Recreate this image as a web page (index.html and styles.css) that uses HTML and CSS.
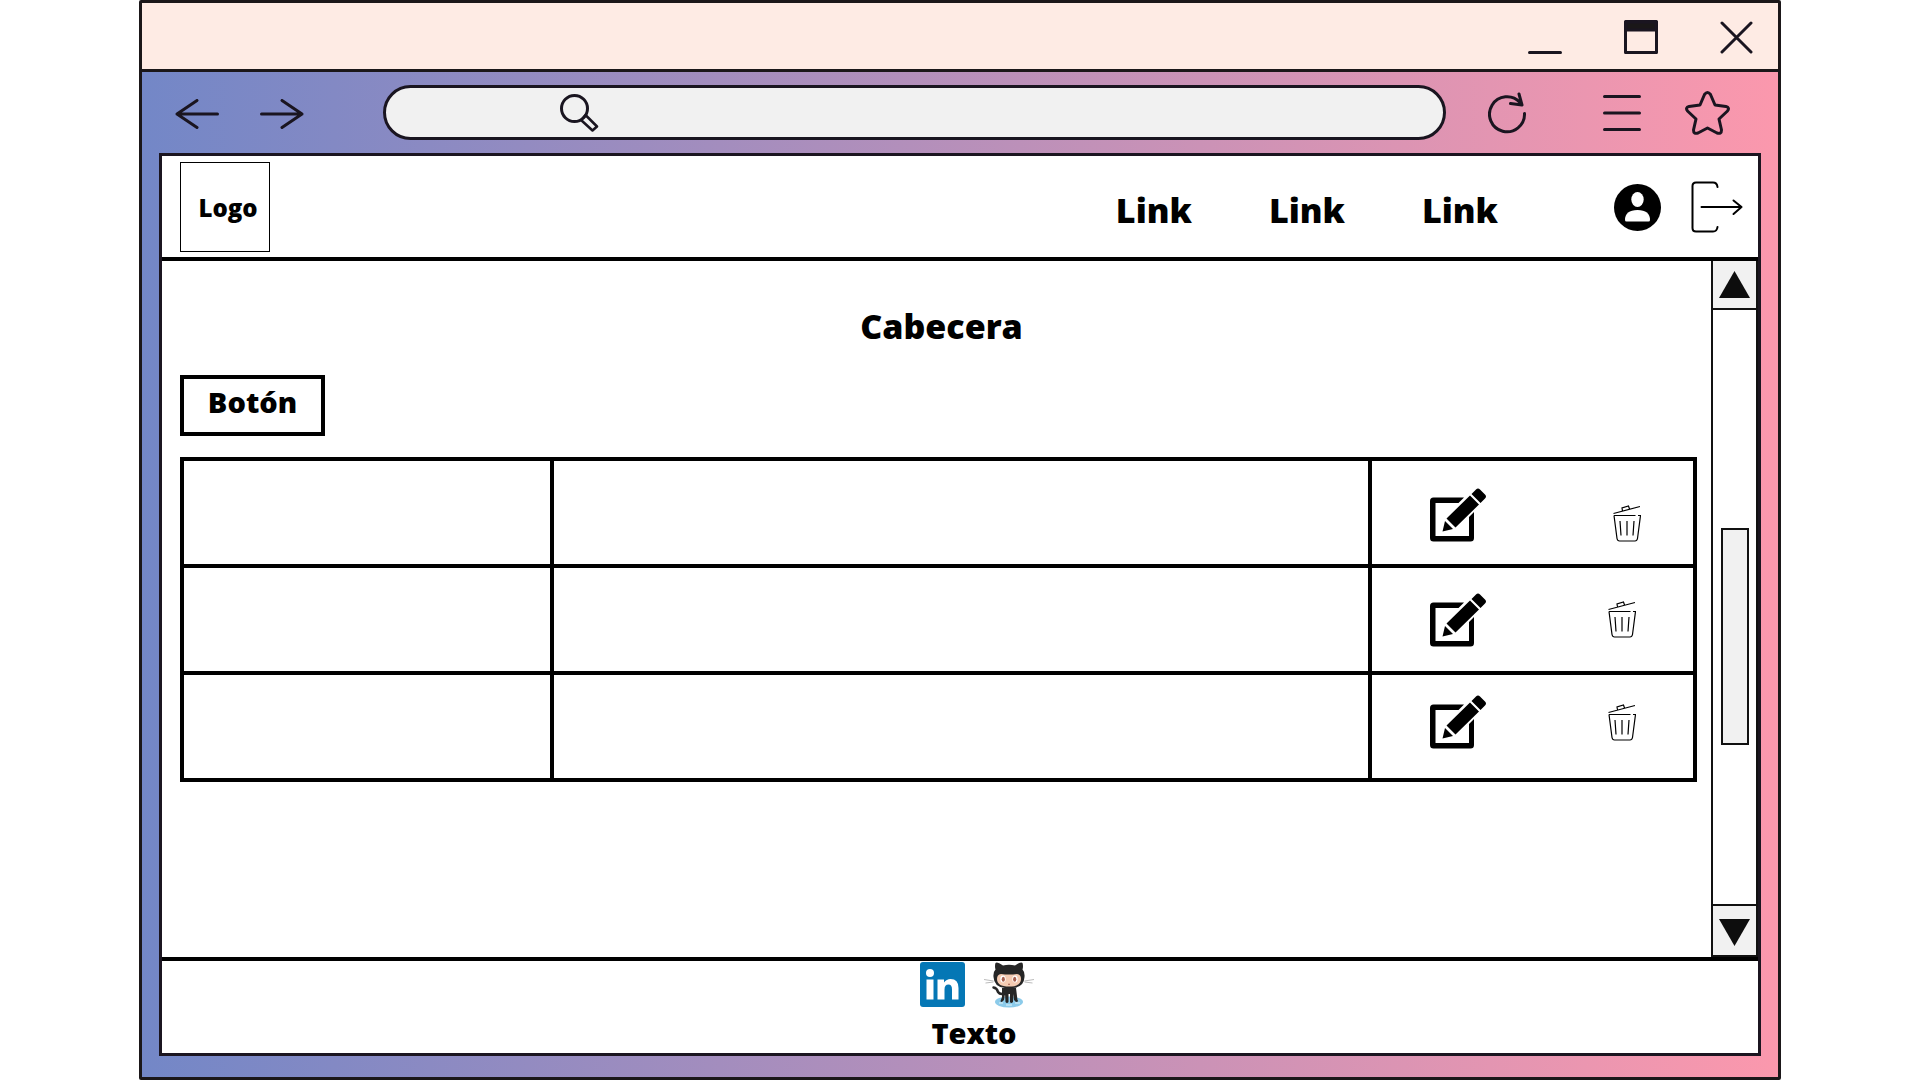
FILE: index.html
```html
<!DOCTYPE html>
<html lang="es">
<head>
<meta charset="utf-8">
<title>Cabecera</title>
<link rel="stylesheet" href="styles.css">
</head>
<body>
<svg class="defs" aria-hidden="true">
  <symbol id="edit" viewBox="0 0 56 54">
    <path d="M34 9.500H3.500A3.500 3.500 0 0 0 0 13V50A3.500 3.500 0 0 0 3.500 53.500H40.500A3.500 3.500 0 0 0 44 50V24L39 29V48H5.500V15H28.500Z"/>
    <path d="M40 7.500 49 16.500 25.500 39.500 16.500 30.500ZM41.500 6 46 1.500Q48 -.5 50 1.500L55 6.500Q57 8.500 55 10.500L50.500 15ZM15 33 23 41 12.500 43.500Z"/>
  </symbol>
  <symbol id="trash" viewBox="0 0 28 37">
    <path d="M.5 8.500 27 1.500M9.500 6 9 3 15.500 1 16.500 4M1 10.500H22.500M25 10.500H27.500L24.500 33.500Q24 36 22 36H6.500Q4.500 36 4 33.500L1 10.500M7 16 8 30.500M14 16V30.500M21 16 20 30.500" fill="none" stroke="#000" stroke-width="1.200"/>
  </symbol>
</svg>
<div class="window">
  <div class="titlebar">
    <button class="icon-btn" aria-label="Minimizar"><svg width="34" height="34" viewBox="0 0 34 34" class="line"><path d="M1.500 32.500H32.500"/></svg></button>
    <button class="icon-btn" aria-label="Maximizar"><svg width="34" height="34" viewBox="0 0 34 34" class="line"><path d="M1.500 1.500H32.500V32.500H1.500Z"/><path d="M2 2H32V10H2Z" fill="#1a1718"/></svg></button>
    <button class="icon-btn" aria-label="Cerrar"><svg width="34" height="34" viewBox="0 0 34 34" class="line"><path d="M2 3 31 32M31 3 2 32"/></svg></button>
  </div>
  <div class="toolbar">
    <div class="history">
      <button class="icon-btn" aria-label="Atrás"><svg width="44" height="30" viewBox="0 0 44 30" class="line"><path d="M42.500 15H2L22 1.500M2 15 22 28.500"/></svg></button>
      <button class="icon-btn" aria-label="Adelante"><svg width="44" height="30" viewBox="0 0 44 30" class="line"><path d="M1.500 15H42L22 1.500M42 15 22 28.500"/></svg></button>
    </div>
    <label class="search">
      <svg width="39" height="38" viewBox="0 0 39 38" class="line"><circle cx="14.500" cy="14.500" r="13" /><path d="M21 26 25.500 21 37 32.500 32.500 36.500Z" stroke-width="2.500"/></svg>
      <input type="text" aria-label="Dirección">
    </label>
    <div class="tools">
      <button class="icon-btn" aria-label="Recargar"><svg width="39" height="42" viewBox="0 0 39 42" class="line"><path d="M36.500 21.500A17.500 17.500 0 1 1 32 10.500M31 2 34 13 22.500 11.500"/></svg></button>
      <button class="icon-btn" aria-label="Menú"><svg width="38" height="38" viewBox="0 0 38 38" class="line"><path d="M1.500 2.500H36.500M1.500 19H36.500M1.500 35.500H36.500"/></svg></button>
      <button class="icon-btn star" aria-label="Favoritos"><svg width="45" height="44" viewBox="0 0 45 44" class="line"><path d="M19.500 3.500Q22.500 -.5 25.500 3.500L30 14 41 15.500Q45 16.500 42.500 20L34 28 36.500 39Q36.500 43.500 32 42L22.500 37 13 42Q8.500 43.500 8.500 39L11 28 2.500 20Q0 16.500 4 15.500L15 14Z"/></svg></button>
    </div>
  </div>
  <div class="page">
    <header class="header">
      <a href="#" class="logo">Logo</a>
      <nav class="nav">
        <a href="#">Link</a>
        <a href="#">Link</a>
        <a href="#">Link</a>
      </nav>
      <div class="account">
        <button class="icon-btn" aria-label="Perfil"><svg width="47" height="47" viewBox="0 0 47 47"><circle cx="23.500" cy="23.500" r="23.500"/><ellipse cx="23.500" cy="15.500" rx="6.200" ry="7.500" fill="#fff"/><path d="M11 36Q11 26 23.500 26T36 36Q36 37.500 34.500 37.500H12.500Q11 37.500 11 36Z" fill="#fff"/></svg></button>
        <button class="icon-btn" aria-label="Salir"><svg width="52" height="52" viewBox="0 0 52 52" class="line logout"><path d="M26.500 6Q26 1.500 22 1.500H5Q1.500 1.500 1.500 5V47Q1.500 50.500 5 50.500H22Q26 50.500 26.500 46M10.500 26H50.500M42.500 19.500 50.500 26 42.500 33"/></svg></button>
      </div>
    </header>
    <div class="body">
      <main class="main">
        <h1>Cabecera</h1>
        <button class="button">Botón</button>
        <table class="table">
          <colgroup><col class="col-name"><col><col class="col-actions"></colgroup>
          <tbody>
            <tr><td></td><td></td><td><div class="actions actions-low">
              <button class="icon-btn" aria-label="Editar"><svg width="56" height="54"><use href="#edit"/></svg></button>
              <button class="icon-btn" aria-label="Borrar"><svg width="28" height="37"><use href="#trash"/></svg></button>
            </div></td></tr>
            <tr><td></td><td></td><td><div class="actions">
              <button class="icon-btn" aria-label="Editar"><svg width="56" height="54"><use href="#edit"/></svg></button>
              <button class="icon-btn" aria-label="Borrar"><svg width="28" height="37"><use href="#trash"/></svg></button>
            </div></td></tr>
            <tr><td></td><td></td><td><div class="actions actions-high">
              <button class="icon-btn" aria-label="Editar"><svg width="56" height="54"><use href="#edit"/></svg></button>
              <button class="icon-btn" aria-label="Borrar"><svg width="28" height="37"><use href="#trash"/></svg></button>
            </div></td></tr>
          </tbody>
        </table>
      </main>
      <div class="scrollbar">
        <button class="scroll-btn up" aria-label="Subir"><svg width="31" height="27" viewBox="0 0 31 27"><path d="M15.500 0 31 27H0Z"/></svg></button>
        <div class="track"><div class="thumb"></div></div>
        <button class="scroll-btn down" aria-label="Bajar"><svg width="31" height="27" viewBox="0 0 31 27"><path d="M15.500 27 31 0H0Z"/></svg></button>
      </div>
    </div>
    <footer class="footer">
      <div class="social">
        <a href="#" aria-label="LinkedIn"><svg width="45" height="45" viewBox="0 0 45 45"><rect width="45" height="45" rx="3" fill="#0577b5"/><g fill="#fff"><circle cx="10" cy="11" r="4"/><rect x="6.500" y="17.500" width="7" height="20"/><path d="M17.500 17.500H24V20.500Q26.500 17 30.500 17 38.500 17 38.500 26V37.500H32V27.500Q32 22.500 28.500 22.500 24.500 22.500 24.500 27.500V37.500H17.500Z"/></g></svg></a>
        <a href="#" aria-label="GitHub"><svg width="52" height="46" viewBox="0 0 52 46">
          <ellipse cx="26" cy="40" rx="14" ry="5.500" fill="#8ccbea"/>
          <path d="M16 41H20M23 43H29M32 41H37" stroke="#c4e6f5" stroke-width="1.500"/>
          <path d="M10.500 25.500Q14 26 15 30 17 33 22 31.500" fill="none" stroke="#262626" stroke-width="2.500" stroke-linecap="round"/>
          <path d="M19 26H33L34.500 38Q36 40 33 40L31 38 30.500 32 30 40Q28 42 27 40V32H25.500V40Q24 42 22.500 40L22 32 21 38Q18 41.500 17.500 39L19 35Z" fill="#262626"/>
          <path d="M12.500 1Q14-.5 20 3.500 26 2 32 3.500 38-.5 39.500 1 40.500 4 39.500 7.500 42 10 41.500 15 41 25 30 26H22Q11 25 10.500 15 10 10 12.500 7.500 11.500 4 12.500 1Z" fill="#262626"/>
          <path d="M18 12Q22 12.500 26 12.500T34 12Q38 12.500 38 17 38 24.500 26 24.500T14 17Q14 12.500 18 12Z" fill="#f4cbb2"/>
          <g fill="#fff"><ellipse cx="20" cy="17" rx="2.700" ry="3.500"/><ellipse cx="32" cy="17" rx="2.700" ry="3.500"/></g>
          <g fill="#a75f4e"><ellipse cx="20.300" cy="17.300" rx="1.600" ry="2.500"/><ellipse cx="31.700" cy="17.300" rx="1.600" ry="2.500"/></g>
          <path d="M25 22Q26 23 27 22" fill="none" stroke="#a75f4e"/>
          <path d="M1 17.500 10.500 19M2.500 21 10.500 20M51 17.500 41.500 19M49.500 21 41.500 20" stroke="#aaa" stroke-width=".8"/>
        </svg></a>
      </div>
      <p>Texto</p>
    </footer>
  </div>
</div>
</body>
</html>
```
FILE: styles.css
```css
* {
  box-sizing: border-box;
}

body {
  margin: 0;
  padding: 0 139px;
  background: #fff;
  color: #000;
  font-family: "Open Sans", sans-serif;
  font-weight: 800;
}

a {
  color: inherit;
  text-decoration: none;
}

svg {
  display: block;
}

.defs {
  position: absolute;
  width: 0;
  height: 0;
}

.line {
  fill: none;
  stroke: #1a1520;
  stroke-width: 3;
  stroke-linecap: round;
  stroke-linejoin: round;
}

.logout {
  stroke: #000;
  stroke-width: 2;
}

.icon-btn {
  padding: 0;
  border: 0;
  background: none;
}

.window {
  display: flex;
  flex-direction: column;
  min-height: 100vh;
  border: 3px solid #1b1719;
  border-radius: 2px;
  background: linear-gradient(90deg, #7387c7, #fb98ad);
}

.titlebar {
  display: flex;
  align-items: center;
  justify-content: flex-end;
  gap: 62px;
  height: 69px;
  padding: 1px 24px 0 0;
  border-bottom: 3px solid #1b1719;
  background: #feebe4;
}

.toolbar {
  display: flex;
  align-items: center;
  height: 81px;
  padding: 0 48px 0 33px;
}

.history {
  display: flex;
  gap: 41px;
  margin-right: 79px;
  padding-top: 2px;
}

.search {
  display: flex;
  flex: 1;
  align-items: center;
  gap: 16px;
  height: 55px;
  padding: 0 28px 0 174px;
  border: 3px solid #1a1520;
  border-radius: 28px;
  background: #f1f1f1;
}

.search input {
  flex: 1;
  min-width: 0;
  border: 0;
  outline: 0;
  background: none;
  font: inherit;
  font-size: 24px;
}

.tools {
  display: flex;
  align-items: center;
  margin-left: 42px;
}

.tools .icon-btn + .icon-btn {
  margin-left: 76px;
}

.tools .icon-btn + .star {
  margin-left: 44px;
}

.page {
  display: flex;
  flex: 1;
  flex-direction: column;
  margin: 0 17px 21px;
  border: 3px solid #1b1520;
  background: #fff;
}

.header {
  display: flex;
  align-items: center;
  height: 105px;
  padding: 1px 15px 0 18px;
  border-bottom: 4px solid #000;
}

.logo {
  display: grid;
  place-items: center;
  width: 90px;
  height: 90px;
  padding-left: 6px;
  border: 1px solid #000;
  font-size: 24px;
}

.nav {
  display: flex;
  gap: 77px;
  margin-left: auto;
  padding-top: 6px;
  font-size: 34px;
}

.account {
  display: flex;
  align-items: center;
  gap: 30px;
  margin-left: 116px;
}

.body {
  display: flex;
  flex: 1;
}

.main {
  flex: 1;
  padding: 41px 14px 0 18px;
}

h1 {
  margin: 0 0 25px;
  padding-left: 6px;
  font-size: 34px;
  font-weight: 800;
  line-height: 48px;
  text-align: center;
}

.button {
  display: block;
  width: 145px;
  height: 61px;
  margin-bottom: 21px;
  padding: 0 0 8px;
  border: 4px solid #000;
  background: #fff;
  color: #000;
  font: inherit;
  font-size: 29px;
  line-height: 40px;
}

.table {
  width: 100%;
  border-collapse: collapse;
  table-layout: fixed;
}

.table td {
  height: 107px;
  padding: 0;
  border: 4px solid #000;
}

.col-name {
  width: 370px;
}

.col-actions {
  width: 325px;
}

.actions {
  display: flex;
  align-items: center;
  gap: 122px;
  padding-left: 58px;
}

.actions-low {
  align-items: flex-end;
  gap: 127px;
  padding-top: 5px;
}

.actions-high {
  padding-bottom: 9px;
}

.scrollbar {
  display: flex;
  flex-direction: column;
  width: 47px;
  border: solid #111;
  border-width: 0 2px 2px;
}

.scroll-btn {
  display: grid;
  place-items: center;
  height: 49px;
  padding: 0;
  border: 0 solid #111;
  background: #f1f1f1;
}

.scroll-btn svg {
  fill: #0d0d0d;
}

.up {
  border-bottom-width: 2px;
}

.down {
  height: 51px;
  padding-top: 4px;
  border-top-width: 2px;
}

.track {
  display: grid;
  flex: 1;
  justify-items: center;
  padding: 218px 0 159px;
}

.thumb {
  width: 28px;
  border: 2px solid #111;
  background: #f1f1f1;
}

.footer {
  display: flex;
  flex-direction: column;
  align-items: center;
  height: 96px;
  padding: 1px 0 0 28px;
  border-top: 4px solid #000;
}

.social {
  display: flex;
  gap: 18px;
  padding-left: 6px;
}

.footer p {
  margin: 5px 0 0;
  font-size: 29px;
  line-height: 40px;
}
```
